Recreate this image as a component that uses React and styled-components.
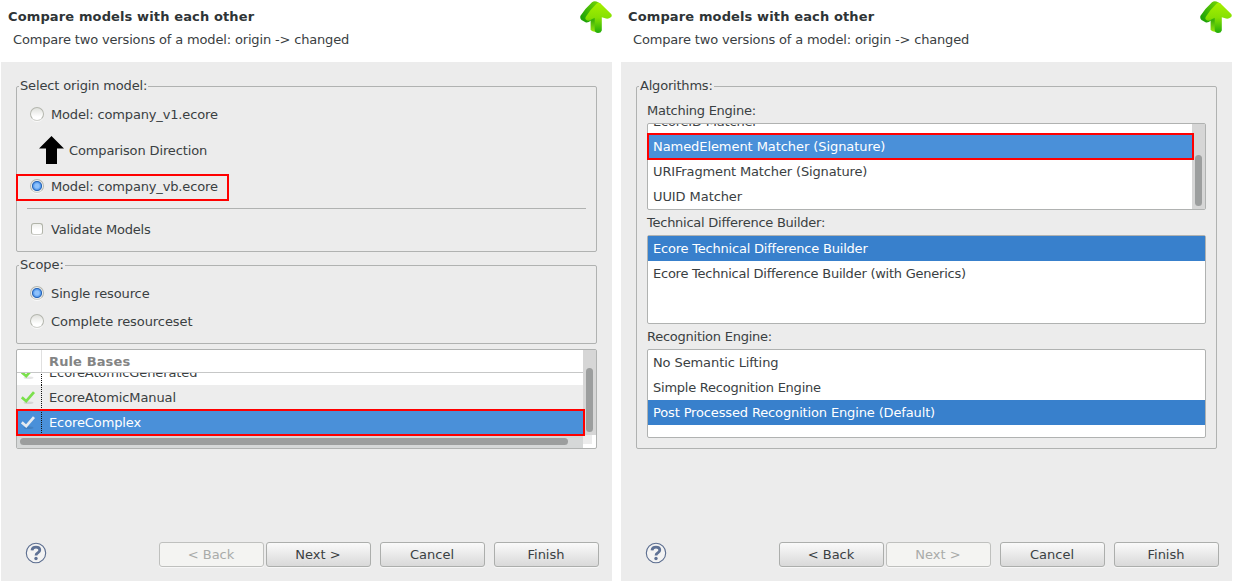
import React from "react";
import styled, { createGlobalStyle, css } from "styled-components";

const Global = createGlobalStyle`
  * { box-sizing: border-box; }
  html, body { margin: 0; background: #fff; }
  body {
    font: 13px/15px "DejaVu Sans", sans-serif;
    color: #3a4042;
    overflow: hidden;
  }
`;

const line = "#b0b2b1";

const Screen = styled.div`
  display: flex;
  gap: 9px;
  width: 1234px;
  height: 583px;
  padding: 0 0 2px 1px;
`;
const Dialog = styled.section`
  display: flex;
  flex-direction: column;
  width: 611px;
  height: 581px;
`;
const Header = styled.header`
  display: flex;
  justify-content: space-between;
  height: 62px;
  padding: 9px 0 0 7px;
`;
const Title = styled.h1`
  margin: 0;
  font-size: 13px;
  line-height: 15px;
  letter-spacing: 0.13px;
  color: #2e3436;
`;
const Subtitle = styled.p`
  margin: 8px 0 0 5px;
  letter-spacing: -0.16px;
`;
const Text = styled.span`
  letter-spacing: ${(p) => p.$track || 0}px;
  white-space: nowrap;
`;
const HeaderIcon = styled.svg`
  width: 32px;
  height: 34px;
  margin-top: -9px;
`;
const Body = styled.main`
  flex: 1;
  display: flex;
  flex-direction: column;
  padding: 24px 15px 0;
  background: #ececec;
`;
const Group = styled.div`
  height: ${(p) => p.$height}px;
  margin-bottom: ${(p) => p.$gap || 0}px;
  padding: 0 10px;
  border: 1px solid ${line};
  border-radius: 2px;
`;
const Legend = styled.div`
  width: max-content;
  height: 15px;
  margin: -9px 0 ${(p) => p.$gap}px -8px;
  padding: 0 1px;
  letter-spacing: ${(p) => p.$track || 0}px;
  background: #ececec;
`;
const Option = styled.label`
  display: flex;
  align-items: center;
  gap: 7px;
  height: 28px;
  padding-left: 3px;
  position: relative;
`;
const RadioDot = styled.span`
  width: 14px;
  height: 14px;
  border-radius: 50%;
  border: 1px solid #b4b6ae;
  border-bottom-color: #cfd0cb;
  background: linear-gradient(#e0e1dd, #fff 75%);
  box-shadow: 0 1px 0 #fafafa;
  ${(p) =>
    p.$on &&
    css`
      background: radial-gradient(circle at 50% 50%, #8fc2fb 0 2px, #5a9ff0 3.5px, #2763b4 4.6px, #eef0f0 5.5px);
    `}
`;
const CheckSquare = styled.span`
  width: 12px;
  height: 12px;
  margin: 0 1px;
  border-radius: 3px;
  border: 1px solid #b1b4a9;
  border-bottom-color: #cbccc7;
  background: linear-gradient(#eeefec, #fff 60%);
  box-shadow: 0 1px 0 #fafafa;
`;
const Direction = styled.div`
  display: flex;
  align-items: center;
  gap: 5px;
  height: 44px;
  padding-left: 12px;
`;
const Separator = styled.div`
  height: 1px;
  margin: 8px 0 6px;
  background: ${line};
`;
const Highlight = styled.span`
  position: absolute;
  inset: ${(p) => p.$inset};
  border: 2px solid #ff0000;
  z-index: 1;
`;
const Table = styled.div`
  display: grid;
  grid-template-columns: 566px 13px;
  grid-template-rows: 23px 62px 13px;
  height: 100px;
  border: 1px solid ${line};
  border-radius: 2px;
  background: #fff;
`;
const TableHead = styled.div`
  display: flex;
  border-bottom: 1px solid #c6c7c7;
  color: #838484;
  font-weight: bold;
`;
const HeadSpacer = styled.div`
  width: 25px;
  border-right: 1px solid #e0e0e0;
`;
const HeadLabel = styled.div`
  padding: 4px 7px;
  letter-spacing: 0.12px;
`;
const TableBody = styled.div`
  display: flex;
  flex-direction: column;
  min-height: 0;
`;
const ClipRows = styled.div`
  height: 12px;
  display: flex;
  align-items: flex-end;
  overflow: hidden;
`;
const TableRow = styled.div`
  position: relative;
  display: flex;
  flex: 0 0 auto;
  width: 100%;
  height: 25px;
  color: ${(p) => (p.$selected ? "#fff" : "inherit")};
  background: ${(p) => (p.$selected ? "#4a90d9" : p.$alt ? "#ededed" : "#fff")};
`;
const CheckCell = styled.div`
  width: 25px;
  padding: 5px 0 0 4px;
  background: repeating-linear-gradient(#111 0 1px, transparent 1px 2px) right / 1px 100% no-repeat;
`;
const NameCell = styled.div`
  padding: 5px 7px;
  letter-spacing: -0.11px;
`;
const VTrack = styled.div`
  grid-row: ${(p) => p.$rows || "auto"};
  grid-column: 2;
  width: 13px;
  padding: ${(p) => p.$pad};
  background: #d6d6d6;
`;
const Thumb = styled.div`
  width: ${(p) => p.$w}px;
  height: ${(p) => p.$h}px;
  border-radius: 4px;
  background: #9c9e9e;
`;
const HTrack = styled.div`
  padding: 3px 3px;
  background: #d6d8d8;
`;
const Corner = styled.div`
  width: 9px;
  height: 9px;
  background: #ececec;
`;
const Caption = styled.div`
  height: ${(p) => p.$height}px;
  padding-top: ${(p) => p.$top}px;
  letter-spacing: -0.25px;
`;
const List = styled.div`
  display: flex;
  height: ${(p) => p.$height}px;
  border: 1px solid ${line};
  border-radius: 2px;
  background: #fff;
`;
const ListRows = styled.div`
  flex: 1;
  min-width: 0;
`;
const ListItem = styled.div`
  position: relative;
  height: 25px;
  flex: 1 0 auto;
  padding: 5px;
  letter-spacing: ${(p) => p.$track || 0}px;
  color: ${(p) => (p.$fill ? "#fff" : "inherit")};
  background: ${(p) => p.$fill || "transparent"};
`;
const ClippedItem = styled.div`
  display: flex;
  align-items: flex-end;
  height: 10px;
  overflow: hidden;
`;
const Footer = styled.footer`
  display: flex;
  align-items: flex-start;
  height: 39px;
  margin: auto -2px 0 9px;
`;
const HelpIcon = styled.svg`
  width: 22px;
  height: 22px;
  margin-right: auto;
`;
const Button = styled.button`
  width: 105px;
  height: 25px;
  margin-left: ${(p) => p.$gap}px;
  padding: 0 1px 0 0;
  font: inherit;
  color: ${(p) => (p.disabled ? "#a9aba9" : "#3a4042")};
  border: 1px solid ${(p) => (p.disabled ? "#bfc0be" : "#acaeac")};
  border-radius: 3px;
  background: ${(p) => (p.disabled ? "#f4f4f2" : "linear-gradient(#fafafa, #d9d9d9)")};
  box-shadow: 0 1px 0 #f7f7f7;
`;

const GreenArrow = ({ id }) => (
  <HeaderIcon viewBox="0 0 32 34">
    <defs>
      <linearGradient id={id + "f"} x1="0" y1="0" x2="0" y2="1">
        <stop offset="0" stopColor="#a6f000" />
        <stop offset="0.5" stopColor="#86e002" />
        <stop offset="1" stopColor="#22ac0a" />
      </linearGradient>
      <linearGradient id={id + "s"} x1="1" y1="0" x2="0.1" y2="0.8">
        <stop offset="0" stopColor="#7ad806" />
        <stop offset="1" stopColor="#1ea208" />
      </linearGradient>
      <linearGradient id={id + "b"} x1="0" y1="0" x2="0" y2="1">
        <stop offset="0" stopColor="#1f9f08" />
        <stop offset="1" stopColor="#9be80c" />
      </linearGradient>
    </defs>
    <path d="M10.600 17 H17 V32 Q11.500 31.500 10.600 29.500 Z" fill={`url(#${id}b)`} />
    <path d="M12 2.200 Q14 .6 16.500 1.500 L20.500 3.500 L17 19 L11 20.500 Q8 23 5.500 22.200 L1.500 20 Q-.4 18 .5 15.800 Q5 8.500 12 2.200 Z" fill={`url(#${id}s)`} />
    <path d="M16.700 3.600 Q18.500 1.800 20.500 3.400 L31.200 14 Q32.300 15.500 31.200 17 Q28.500 19.300 26 18.600 L21.800 17.300 V30.500 Q21 33 18 33 Q15 32.800 14.700 30 V17.800 L9.500 20.600 Q7.500 21.300 5.800 19.600 Q4.800 18.300 6 16.500 Q10.500 9.500 16.700 3.600 Z" fill={`url(#${id}f)`} />
  </HeaderIcon>
);

const Check = ({ color }) => (
  <svg width="16" height="15" viewBox="0 0 16 15">
    <ellipse cx="7.500" cy="12.700" rx="5" ry="1.300" fill="#000" opacity="0.1" />
    <path d="M.8 7.300 L5.200 11.200 L13 2.200" fill="none" stroke={color} strokeWidth="2.700" />
  </svg>
);

const Help = () => (
  <HelpIcon viewBox="0 0 22 22">
    <circle cx="11" cy="11" r="9.700" fill="#f3f3f3" stroke="#5b6d8f" strokeWidth="1.100" />
    <path d="M7 8.300 Q7.300 5.100 11 5.100 Q14.800 5.100 14.800 8 Q14.800 9.700 12.900 10.700 Q11 11.600 11 13.600" fill="none" stroke="#5f7295" strokeWidth="2.800" />
    <circle cx="11" cy="16.500" r="1.700" fill="#5f7295" />
  </HelpIcon>
);

function WizardPage({ id, backDisabled, nextDisabled, children }) {
  return (
    <Dialog>
      <Header>
        <div>
          <Title>Compare models with each other</Title>
          <Subtitle>Compare two versions of a model: origin -&gt; changed</Subtitle>
        </div>
        <GreenArrow id={id} />
      </Header>
      <Body>
        {children}
        <Footer>
          <Help />
          <Button disabled={backDisabled}>&lt; Back</Button>
          <Button $gap={2} disabled={nextDisabled}>Next &gt;</Button>
          <Button $gap={9}>Cancel</Button>
          <Button $gap={9}>Finish</Button>
        </Footer>
      </Body>
    </Dialog>
  );
}

function RuleRow({ name, alt, selected }) {
  return (
    <TableRow $alt={alt} $selected={selected}>
      <CheckCell><Check color={selected ? "#e6ebf0" : "#7be04c"} /></CheckCell>
      <NameCell>{name}</NameCell>
      {selected && <Highlight $inset="-1px -2px -1px -1px" />}
    </TableRow>
  );
}

export default function App() {
  return (
    <Screen>
      <Global />
      <WizardPage id="left" backDisabled>
        <Group $height={166} $gap={13}>
          <Legend $gap={7} $track={-0.15}>Select origin model:</Legend>
          <Option><RadioDot /><Text $track={-0.15}>Model: company_v1.ecore</Text></Option>
          <Direction>
            <svg width="25" height="28" viewBox="0 0 25 28">
              <path d="M12.500 0 L25 12.500 H18 V28 H7 V12.500 H0 Z" fill="#000" />
            </svg>
            <Text $track={-0.13}>Comparison Direction</Text>
          </Direction>
          <Option>
            <RadioDot $on /><Text $track={-0.15}>Model: company_vb.ecore</Text>
            <Highlight $inset="2px 357px -1px -11px" />
          </Option>
          <Separator />
          <Option><CheckSquare /><Text $track={-0.18}>Validate Models</Text></Option>
        </Group>
        <Group $height={79} $gap={5}>
          <Legend $gap={7}>Scope:</Legend>
          <Option><RadioDot $on /><Text $track={-0.12}>Single resource</Text></Option>
          <Option><RadioDot /><Text $track={-0.07}>Complete resourceset</Text></Option>
        </Group>
        <Table>
          <TableHead><HeadSpacer /><HeadLabel>Rule Bases</HeadLabel></TableHead>
          <VTrack $rows="1 / 3" $pad="18px 3px 0"><Thumb $w={7} $h={64} /></VTrack>
          <TableBody>
            <ClipRows><RuleRow name="EcoreAtomicGenerated" /></ClipRows>
            <RuleRow name="EcoreAtomicManual" alt />
            <RuleRow name="EcoreComplex" selected />
          </TableBody>
          <HTrack><Thumb $w={548} $h={7} /></HTrack>
          <Corner />
        </Table>
      </WizardPage>

      <WizardPage id="right" nextDisabled>
        <Group $height={363}>
          <Legend $gap={0} $track={-0.2}>Algorithms:</Legend>
          <Caption $height={30} $top={10}>Matching Engine:</Caption>
          <List $height={87}>
            <ListRows>
              <ClippedItem><ListItem $track={-0.2}>EcoreID Matcher</ListItem></ClippedItem>
              <ListItem $fill="#4a90d9" $track={-0.07}>
                NamedElement Matcher (Signature)
                <Highlight $inset="-1px -2px -1px -1px" />
              </ListItem>
              <ListItem $track={-0.14}>URIFragment Matcher (Signature)</ListItem>
              <ListItem $track={-0.08}>UUID Matcher</ListItem>
            </ListRows>
            <VTrack $pad="31px 3px 0"><Thumb $w={7} $h={51} /></VTrack>
          </List>
          <Caption $height={25} $top={5}>Technical Difference Builder:</Caption>
          <List $height={89}>
            <ListRows>
              <ListItem $fill="#3880cc" $track={-0.21}>Ecore Technical Difference Builder</ListItem>
              <ListItem $track={-0.24}>Ecore Technical Difference Builder (with Generics)</ListItem>
            </ListRows>
          </List>
          <Caption $height={25} $top={5}>Recognition Engine:</Caption>
          <List $height={89}>
            <ListRows>
              <ListItem $track={-0.1}>No Semantic Lifting</ListItem>
              <ListItem $track={-0.24}>Simple Recognition Engine</ListItem>
              <ListItem $fill="#3880cc" $track={-0.14}>Post Processed Recognition Engine (Default)</ListItem>
            </ListRows>
          </List>
        </Group>
      </WizardPage>
    </Screen>
  );
}
